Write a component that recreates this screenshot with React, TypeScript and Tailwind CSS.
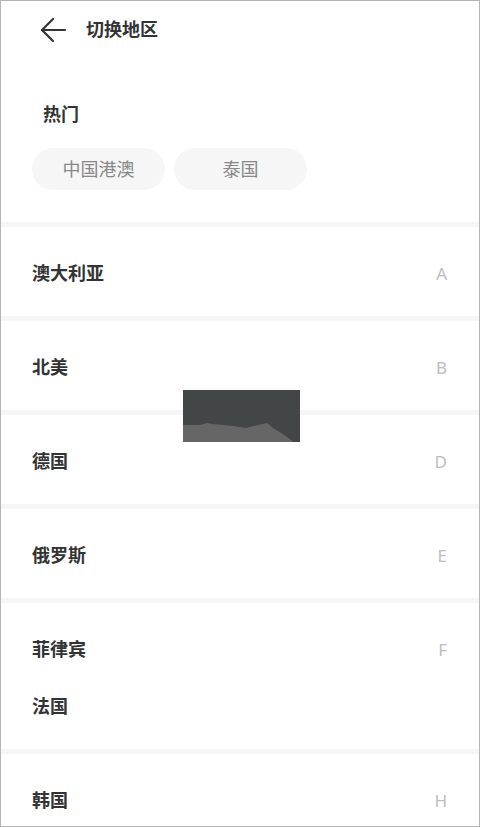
import React from 'react';

interface RegionGroup {
  letter: string;
  names: string[];
}

const hotRegions = ['中国港澳', '泰国'];

const groups: RegionGroup[] = [
  { letter: 'A', names: ['澳大利亚'] },
  { letter: 'B', names: ['北美'] },
  { letter: 'D', names: ['德国'] },
  { letter: 'E', names: ['俄罗斯'] },
  { letter: 'F', names: ['菲律宾', '法国'] },
  { letter: 'H', names: ['韩国'] },
];

const fontStack = { fontFamily: '"Noto Sans", "Noto Sans CJK SC", sans-serif' };

const BackArrow: React.FC = () => (
  <svg width="26" height="26" viewBox="0 0 26 26" fill="none" stroke="#333333" strokeWidth="2.2" strokeLinecap="round" strokeLinejoin="round">
    <path d="M25 13 H2" />
    <path d="M13 2 L2 13 L13 24" />
  </svg>
);

const App: React.FC = () => {
  return (
    <div className="relative h-[827px] w-[480px] overflow-hidden border border-[#b4b4b4] bg-white" style={fontStack}>
      {/* Header */}
      <div className="flex h-[57px] items-center pl-[39px]">
        <BackArrow />
        <span className="ml-[20px] text-[18px] font-bold text-[#333333]">切换地区</span>
      </div>

      {/* Hot regions */}
      <div className="px-[31px] pb-[32px]">
        <div className="mt-[43px] pl-[11px] text-[18px] font-bold leading-[26px] text-[#333333]">热门</div>
        <div className="mt-[21px] flex gap-[9px]">
          {hotRegions.map((name) => (
            <div
              key={name}
              className="flex h-[42px] w-[133px] items-center justify-center rounded-full bg-[#f6f6f6] text-[18px] text-[#888888]"
            >
              {name}
            </div>
          ))}
        </div>
      </div>

      {/* Region list */}
      {groups.map((group) => (
        <div key={group.letter}>
          <div className="h-[5px] bg-[#f6f6f6]" />
          <div className="pt-[18px] pb-[14px]">
            {group.names.map((name, i) => (
              <div key={name} className="flex h-[57px] items-center justify-between pl-[31px] pr-[32px]">
                <span className="text-[18px] font-bold text-[#333333]">{name}</span>
                {i === 0 && <span className="text-[17px] text-[#bdbdbd]">{group.letter}</span>}
              </div>
            ))}
          </div>
        </div>
      ))}

      {/* Toast overlay */}
      <div className="absolute left-[182px] top-[389px] h-[52px] w-[117px] bg-[#434646]">
        <svg width="117" height="52" viewBox="0 0 117 52" className="block">
          <path
            d="M0 35 L17 35 L24 33 L30 34 L50 36 L63 38 L75 35 L84 33 L90 38 L100 44 L108 50 L110 52 L0 52 Z"
            fill="#656665"
          />
        </svg>
      </div>
    </div>
  );
};

export default App;
